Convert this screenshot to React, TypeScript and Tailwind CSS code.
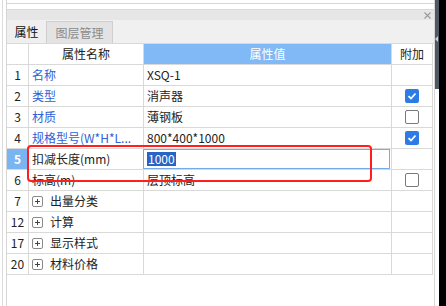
import React from "react";

type Row = {
  no: number;
  name?: string;
  value?: string;
  blue?: boolean;
  check?: boolean | null;
  editing?: boolean;
  group?: string;
};

const rows: Row[] = [
  { no: 1, name: "名称", value: "XSQ-1", blue: true, check: null },
  { no: 2, name: "类型", value: "消声器", blue: true, check: true },
  { no: 3, name: "材质", value: "薄钢板", blue: true, check: false },
  { no: 4, name: "规格型号(W*H*L...", value: "800*400*1000", blue: true, check: true },
  { no: 5, name: "扣减长度(mm)", value: "1000", editing: true, check: null },
  { no: 6, name: "标高(m)", value: "层顶标高", check: false },
  { no: 7, group: "出量分类" },
  { no: 12, group: "计算" },
  { no: 17, group: "显示样式" },
  { no: 20, group: "材料价格" },
];

const CheckBox = ({ checked }: { checked: boolean }) =>
  checked ? (
    <div className="w-[14px] h-[14px] rounded-[2px] bg-[#2d7be5] flex items-center justify-center">
      <svg width="10" height="10" viewBox="0 0 10 10">
        <path d="M1.5 5.2 L4 7.5 L8.5 2.5" stroke="white" strokeWidth="1.8" fill="none" />
      </svg>
    </div>
  ) : (
    <div className="w-[14px] h-[14px] rounded-[2px] border border-[#7a7a7a] bg-white" />
  );

const PlusBox = () => (
  <div className="w-[11px] h-[11px] rounded-[2px] border border-[#8a8a8a] flex items-center justify-center">
    <svg width="7" height="7" viewBox="0 0 7 7">
      <path d="M3.5 1 V6 M1 3.5 H6" stroke="#444" strokeWidth="1" />
    </svg>
  </div>
);

const cols = "grid grid-cols-[22px_115px_248px_41px]";
const cell = "h-[21px] border-r border-b border-[#d9d9d9] flex items-center";

const App = () => {
  return (
    <div
      className="relative w-[446px] h-[306px] bg-white overflow-hidden flex text-[12px] text-[#222]"
      style={{ fontFamily: '"Noto Sans CJK SC", "Noto Sans", sans-serif' }}
    >
      <div className="w-[2px]" />
      <div className="w-px bg-[#dcdcdc]" />
      <div className="w-[3px]" />

      {/* panel */}
      <div className="w-[429px] border-x border-[#d6d6d6] flex flex-col">
        <div className="h-[4px] border-b border-[#d6d6d6]" />
        <div className="h-[5px]" />
        <div className="h-[11px] bg-[#e6e6e6] border-t border-[#dadada] flex items-center justify-end pr-[3px]">
          <svg width="7" height="7" viewBox="0 0 7 7">
            <path d="M0.5 0.5 L6.5 6.5 M6.5 0.5 L0.5 6.5" stroke="#9a9a9a" strokeWidth="1.1" />
          </svg>
        </div>
        <div className="h-[23px] bg-[#f0f0f0] flex items-end">
          <div className="w-[40px] h-[22px] bg-[#efefef] border-r border-[#cfcfcf] flex items-center justify-center text-[#111]">
            属性
          </div>
          <div className="w-[66px] h-[22px] bg-[#e3e3e3] border border-b-0 border-l-0 border-[#cfcfcf] flex items-center justify-center text-[#8c8c8c]">
            图层管理
          </div>
        </div>

        {/* table */}
        <div className="border-t border-[#d9d9d9]">
          <div className={cols}>
            <div className={cell} />
            <div className={`${cell} justify-center`}>属性名称</div>
            <div className={`${cell} justify-center bg-[#80b9f5] border-[#5ea2ec] text-white -ml-px border-l`}>
              属性值
            </div>
            <div className={`${cell} justify-center`}>附加</div>
          </div>

          {rows.map((row) => (
            <div key={row.no} className={cols}>
              <div
                className={`${cell} justify-center ${
                  row.editing ? "bg-[#7ab5f2] text-white font-bold" : ""
                }`}
              >
                {row.no}
              </div>
              {row.group ? (
                <>
                  <div className={`${cell} pl-[3px] gap-[7px]`}>
                    <PlusBox />
                    <span>{row.group}</span>
                  </div>
                  <div className={cell} />
                  <div className={cell} />
                </>
              ) : (
                <>
                  <div className={`${cell} pl-[3px] whitespace-nowrap`}>
                    <span className={row.blue ? "text-[#3160d4]" : ""}>{row.name}</span>
                  </div>
                  <div className={cell}>
                    {row.editing ? (
                      <div className="w-full h-full border-[1.5px] border-[#74ace8] -ml-px flex items-center pl-[3px]">
                        <span className="bg-[#2a63c4] text-white px-px leading-[14px]">
                          {row.value}
                        </span>
                      </div>
                    ) : (
                      <span className="pl-[3px]">{row.value}</span>
                    )}
                  </div>
                  <div className={`${cell} justify-center`}>
                    {row.check !== null && row.check !== undefined && (
                      <CheckBox checked={row.check} />
                    )}
                  </div>
                </>
              )}
            </div>
          ))}
        </div>
      </div>

      {/* scrollbar */}
      <div className="relative w-[4px] flex flex-col">
        <div className="h-[89px] bg-[#4f5964]" />
        <div className="flex-1 bg-white" />
        <div className="absolute left-0 top-[36px] w-0 h-0 border-y-[3px] border-y-transparent border-r-[3px] border-r-[#c9ced3]" />
      </div>
      <div className="w-[7px] bg-black" />

      {/* red highlight box */}
      <div className="absolute left-[27px] top-[145px] w-[345px] h-[37px] border-2 border-[#ff1f1f] rounded-[4px]" />
    </div>
  );
};

export default App;
